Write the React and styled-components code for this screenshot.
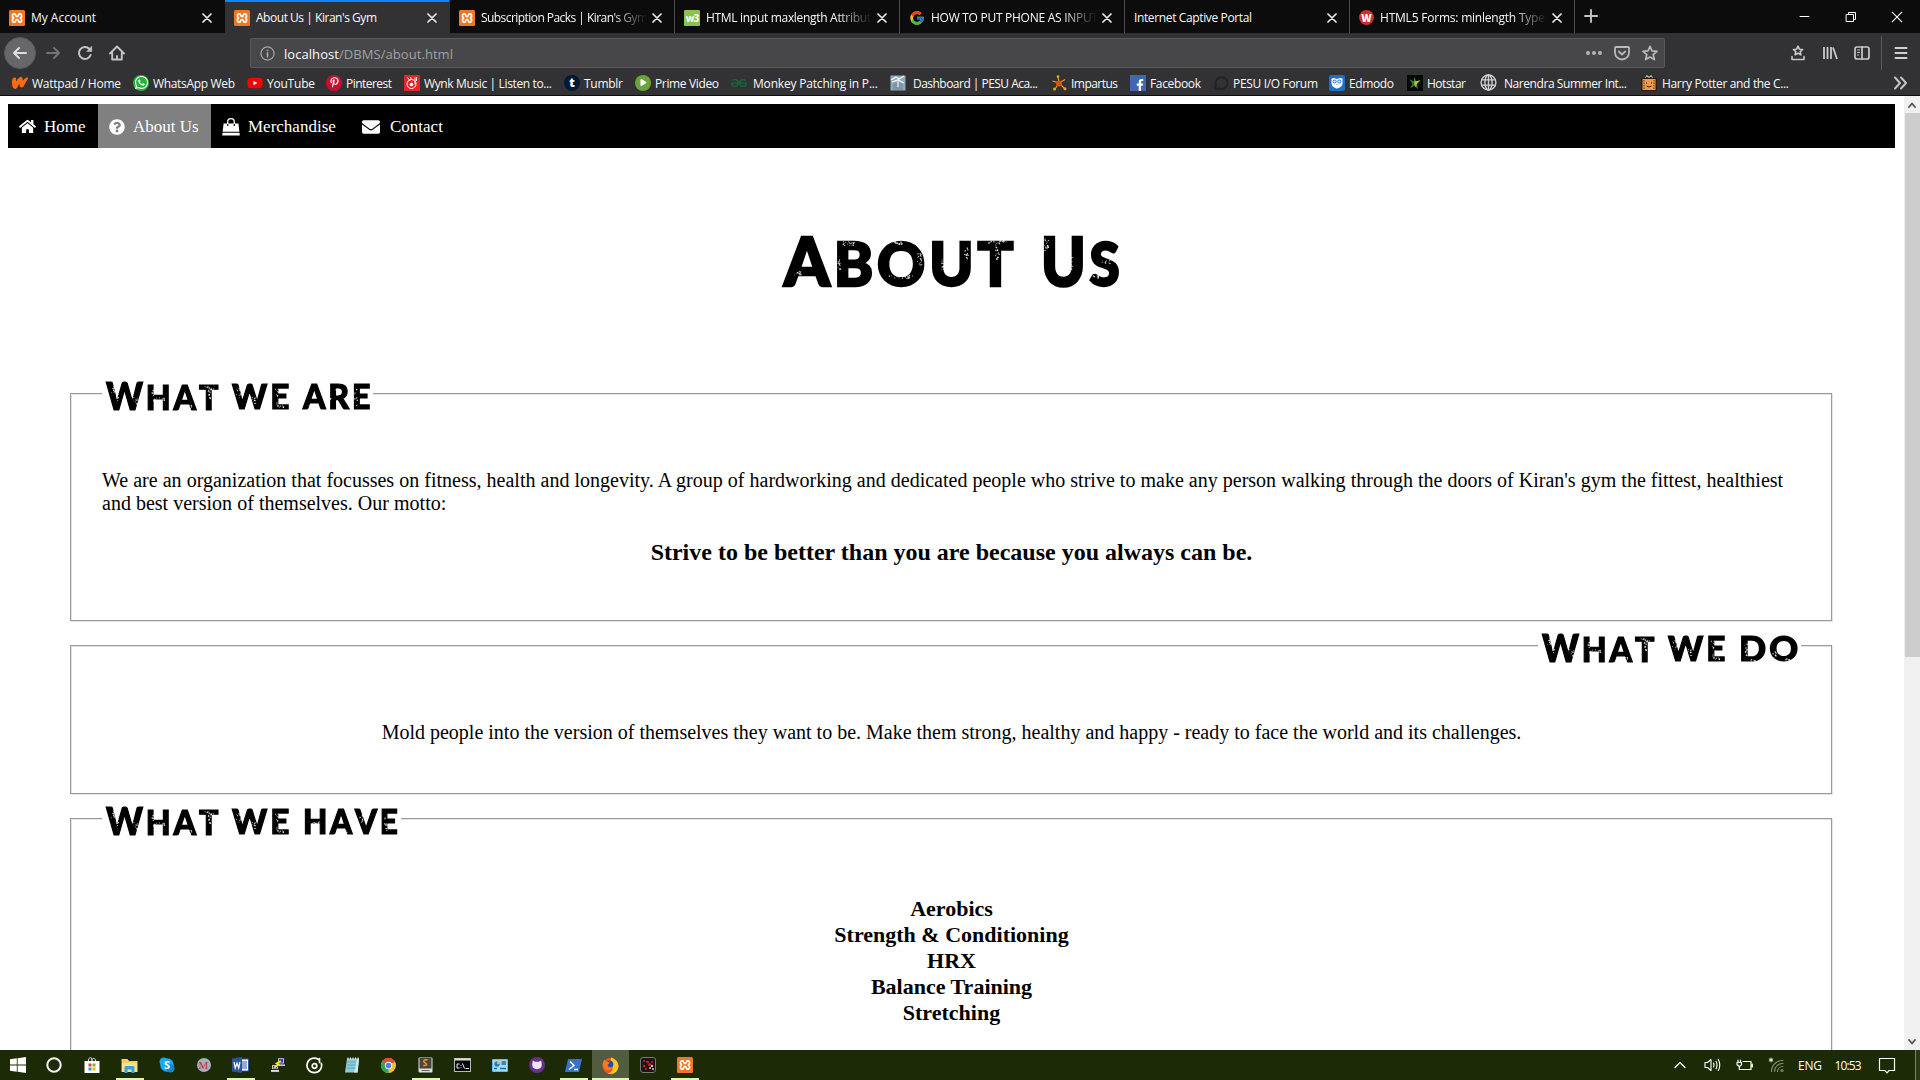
import React, { useLayoutEffect, useRef, useState } from 'react';
import styled, { createGlobalStyle, css } from 'styled-components';
import { FaWhatsapp, FaYoutube, FaPinterestP, FaFacebookF, FaHome, FaQuestionCircle, FaEnvelope, FaPlay } from 'react-icons/fa';
import { FcGoogle } from 'react-icons/fc';
import { SiWattpad, SiGeeksforgeeks } from 'react-icons/si';

const UI = '"Open Sans", "Noto Sans", sans-serif';
const SERIF = '"Liberation Serif", serif';

const GlobalStyle = createGlobalStyle`
  * { box-sizing: border-box; }
  body { margin: 0; background: #fff; overflow: hidden; }
  svg { display: block; flex: none; }
`;

/* ---------- text fitted to a width by tracking ---------- */
const FitBox = styled.span`
  display: block;
  flex: none;
  width: ${(p) => p.$w}px;
  white-space: pre;
`;

function Fit({ w, length, children }) {
  const ref = useRef(null);
  const [tracking, setTracking] = useState(0);
  useLayoutEffect(() => {
    const natural = ref.current.getBoundingClientRect().width;
    setTracking((w - natural) / Math.max(1, length - 1));
  }, [w, length]);
  return (
    <FitBox $w={w}>
      <span ref={ref} style={{ letterSpacing: `${tracking}px` }}>{children}</span>
    </FitBox>
  );
}

/* ---------- display word stretched to a width ---------- */
const StretchText = styled.span`
  display: inline-block;
  letter-spacing: ${(p) => p.$track}px;
  font-kerning: none;
  transform-origin: left;
`;

function Stretch({ w, track, children }) {
  const ref = useRef(null);
  const [scale, setScale] = useState(1);
  useLayoutEffect(() => {
    setScale(w / (ref.current.offsetWidth - track));
  }, [w, track]);
  return (
    <FitBox $w={w}>
      <StretchText ref={ref} $track={track} style={{ transform: `scaleX(${scale})` }}>{children}</StretchText>
    </FitBox>
  );
}

/* ---------- layout ---------- */
const Screen = styled.div`
  display: flex;
  flex-direction: column;
  width: 1920px;
  height: 1080px;
  overflow: hidden;
  background: #fff;
`;

const TabStrip = styled.div`
  display: flex;
  flex: none;
  height: 33px;
  background: #0c0c0d;
  color: #f9f9fa;
  font: 12px ${UI};
`;

const Tab = styled.div`
  display: flex;
  align-items: center;
  width: 225px;
  padding: 2px 7px 0 9px;
  border-right: 1px solid ${(p) => (p.$plain ? 'transparent' : '#4c4c4e')};
  ${(p) => p.$active && css`
    background: #323234;
    box-shadow: inset 0 2px 0 #0a84ff;
  `}
`;

const TabLabel = styled.div`
  flex: 1;
  min-width: 0;
  margin-left: ${(p) => (p.$noIcon ? 0 : 6)}px;
  padding-bottom: 1px;
  ${(p) => p.$fade && css`mask-image: linear-gradient(to right, #000 calc(100% - 36px), transparent calc(100% - 1px));`}
`;

const WindowControls = styled.div`
  display: flex;
  align-items: center;
  margin-left: auto;
  padding-right: 17px;
  gap: 34px;
`;

const NewTab = styled.div`
  display: flex;
  align-items: center;
  padding: 0 0 2px 9px;
`;

const Toolbar = styled.div`
  display: flex;
  flex: none;
  align-items: center;
  height: 40px;
  padding: 0 12px 0 4px;
  background: #323234;
`;

const BackButton = styled.div`
  display: grid;
  place-items: center;
  width: 32px;
  height: 32px;
  border: 1px solid #5a5a5c;
  border-radius: 50%;
  background: #676769;
`;

const NavButtons = styled.div`
  display: flex;
  align-items: center;
  gap: 16px;
  margin-left: 9px;
  width: 205px;
`;

const UrlBar = styled.div`
  display: flex;
  align-items: center;
  width: 1415px;
  height: 30px;
  padding: 0 6px 0 9px;
  border: 1px solid #59595b;
  border-radius: 2px;
  background: #474749;
  color: #a0a0a3;
  font: 13px ${UI};
`;

const UrlText = styled.div`
  flex: 1;
  margin-left: 9px;
  padding-top: 2px;
  b { font-weight: 400; color: #f9f9fa; }
`;

const UrlActions = styled.div`
  display: flex;
  align-items: center;
  gap: 12px;
`;

const ToolbarActions = styled.div`
  display: flex;
  align-items: center;
  margin-left: auto;
  gap: 16px;
`;

const ToolbarDivider = styled.div`
  width: 1px;
  height: 34px;
  margin: 0 -4px 0 -5px;
  background: #5c5c5e;
`;

const Bookmarks = styled.div`
  display: flex;
  flex: none;
  align-items: center;
  height: 23px;
  padding: 0 12px 3px 12px;
  border-bottom: 1px solid #0c0c0d;
  background: #323234;
  color: #f9f9fa;
  font: 12px ${UI};
`;

const Bookmark = styled.div`
  display: flex;
  flex: none;
  align-items: center;
  gap: ${(p) => p.$gap || 4}px;
  width: ${(p) => p.$w}px;
`;

const BookmarkText = styled.div`
  padding-top: 2px;
`;

const Overflow = styled.div`
  margin-left: auto;
`;

const Chip = styled.span`
  display: grid;
  flex: none;
  place-items: center;
  width: ${(p) => p.$s || 16}px;
  height: ${(p) => p.$s || 16}px;
  border-radius: ${(p) => p.$r || '0'};
  background: ${(p) => p.$bg || 'transparent'};
  color: ${(p) => p.$c || '#fff'};
  font: ${(p) => p.$f || `700 11px/1 ${UI}`};
  letter-spacing: ${(p) => p.$ls || 'normal'};
`;

const Viewport = styled.div`
  display: flex;
  flex: 1;
  min-height: 0;
`;

const Page = styled.main`
  flex: 1;
  padding: 8px 9px 0 8px;
  overflow: hidden;
  color: #000;
  font: 20px/23px ${SERIF};
`;

const NavBar = styled.nav`
  display: flex;
  height: 44px;
  background: #000;
`;

const NavItem = styled.a`
  display: flex;
  align-items: center;
  gap: ${(p) => p.$gap || 8}px;
  width: ${(p) => p.$w}px;
  padding: 1px 0 0 11px;
  background: ${(p) => (p.$active ? '#808080' : 'transparent')};
  color: #fff;
  font: 17px/20px ${SERIF};
  white-space: nowrap;
`;

const Printed = styled.span`
  display: flex;
  position: relative;
  gap: ${(p) => p.$gap}px;
  font-family: Lato, sans-serif;
  font-weight: 900;
  font-size: ${(p) => p.$small}px;
  line-height: ${(p) => p.$lh}px;
  text-transform: uppercase;
  -webkit-text-stroke: ${(p) => p.$stroke}px #000;
  paint-order: stroke;
  stroke-linejoin: round;
`;

const Initial = styled.span`
  font-size: ${(p) => p.$size}px;
`;

const Wear = styled.svg`
  position: absolute;
  inset: 0;
  pointer-events: none;
`;

const Title = styled.h1`
  display: flex;
  justify-content: center;
  margin: 69px 0 70px;
  height: 86px;
`;

const Panel = styled.fieldset`
  width: 1762px;
  height: ${(p) => p.$h}px;
  margin: 0 0 4px 62px;
  padding: 0 30px 0 31px;
  border: 1px solid #9a9a9a;
  box-shadow: 1px 1px 0 #e4e4e4, inset 1px 1px 0 #e4e4e4;
`;

const Legend = styled.legend`
  height: 41px;
  padding: 2px 3px 0 4px;
  margin-left: ${(p) => (p.$right ? 'auto' : '0')};
  margin-right: 0;
  background: #fff;
`;

const Paragraph = styled.p`
  margin: 55px 0 0;
  word-spacing: ${(p) => (p.$center ? 0 : 0.07)}px;
  text-align: ${(p) => (p.$center ? 'center' : 'left')};
`;

const Motto = styled.h3`
  margin: 23px 0 0;
  font: 700 24px/28px ${SERIF};
  text-align: center;
`;

const Activities = styled.ul`
  margin: 57px 0 0;
  padding: 0;
  list-style: none;
  font: 700 22px/26px ${SERIF};
  text-align: center;
`;

const Scrollbar = styled.div`
  display: flex;
  flex-direction: column;
  align-items: center;
  justify-content: space-between;
  width: 16px;
  background: #f0f0f0;
`;

const Thumb = styled.div`
  width: 15px;
  height: 544px;
  margin-bottom: auto;
  background: #cdcdcd;
`;

const ScrollArrow = styled.div`
  display: grid;
  place-items: center;
  height: 17px;
`;

const Taskbar = styled.footer`
  display: flex;
  flex: none;
  height: 30px;
  background: #1d2a06;
  color: #fff;
  font: 12px ${UI};
`;

const Task = styled.div`
  display: grid;
  place-items: center;
  width: ${(p) => p.$w || 37}px;
  background-color: ${(p) => (p.$active ? '#515c41' : 'transparent')};
  ${(p) => p.$open && css`
    background-image: linear-gradient(#dcf7ae, #dcf7ae);
    background-repeat: no-repeat;
    background-position: center bottom;
    background-size: ${p.$active ? '37px' : '28px'} 2px;
  `}
`;

const Tray = styled.div`
  display: flex;
  align-items: center;
  margin-left: auto;
`;

const TrayItem = styled.div`
  display: flex;
  justify-content: center;
  width: ${(p) => p.$w}px;
`;

const DesktopEdge = styled.div`
  width: 5px;
  height: 30px;
  margin-left: 9px;
  border-left: 1px solid #78836a;
  background: #2b3a14;
`;

/* ---------- icons ---------- */
const Line = ({ w = 16, h = w, vb = `0 0 ${w} ${h}`, c = '#b9b9bb', sw = 2, children }) => (
  <svg width={w} height={h} viewBox={vb} fill="none" stroke={c} strokeWidth={sw} strokeLinecap="round" strokeLinejoin="round">{children}</svg>
);

const Xampp = ({ s = 16 }) => (
  <svg width={s} height={s} viewBox="0 0 16 16">
    <rect width="16" height="16" rx="1.5" fill="#f37623" />
    <path d="M4.500 3.800H6L7.300 6.500H8.700L10 3.800H11.500L12.500 5V6.800L11.300 8L12.500 9.200V11L11.500 12.200H10L8.700 9.500H7.300L6 12.200H4.500L3.500 11V9.200L4.700 8L3.500 6.800V5Z" fill="none" stroke="#fff" strokeWidth="1.700" strokeLinejoin="round" />
  </svg>
);

const CloseMark = ({ s = 9, sw = 1.7, c = '#e8e8e8' }) => (
  <Line w={s} vb="0 0 10 10" c={c} sw={sw}><path d="M1 1l8 8M9 1L1 9" /></Line>
);

const Bag = () => (
  <svg width="18" height="18" viewBox="0 0 18 18" fill="#fff">
    <path d="M1.600 5.500h14.800l1 8.200H.6zM.5 14.700h17l.3 2.800H.2z" />
    <path d="M5.700 7.500V4a3.300 3.300 0 0 1 6.600 0v3.500" fill="none" stroke="#fff" strokeWidth="1.300" />
    <path d="M5.700 6v2M12.300 6v2" stroke="#000" strokeWidth="1.200" />
  </svg>
);

const Impartus = () => (
  <svg width="16" height="16" viewBox="0 0 16 16" stroke="#e8a41c" strokeWidth="1.200" fill="#e8a41c">
    <path d="M8 8L7 1.500M8 8L14 4.500M8 8l5.500 5.500M8 8L4 14M8 8L1.500 6" />
    <circle cx="8" cy="8.500" r="3" fill="#d8521c" stroke="none" />
    <circle cx="7" cy="1.600" r=".8" /><circle cx="14" cy="13.800" r=".9" /><circle cx="3.600" cy="14" r=".9" />
  </svg>
);

const Dashboard = () => (
  <svg width="16" height="16" viewBox="0 0 16 16">
    <rect x=".5" y=".5" width="15" height="15" fill="#8fa9b8" />
    <path d="M1 5l5-3 3 2 5-3M2 7l6-2 6 3" stroke="#f4f8fa" strokeWidth="1.300" fill="none" />
    <path d="M3 15V9l5-2 5 2v6z" fill="#7d97a6" /><path d="M8 6v6" stroke="#eef" strokeWidth="1.200" />
  </svg>
);

const Edmodo = () => (
  <svg width="16" height="16" viewBox="0 0 16 16">
    <rect width="16" height="16" rx="2" fill="#1f6fc9" />
    <path d="M2.500 3.500L5 3l3 1 3-1 2.500.5V8c0 3-2.500 5-5.500 5.500C5 13 2.500 11 2.500 8z" fill="#fff" />
    <circle cx="5.700" cy="6.500" r="1.500" fill="none" stroke="#1f6fc9" /><circle cx="10.300" cy="6.500" r="1.500" fill="none" stroke="#1f6fc9" />
    <path d="M7.300 9h1.400L8 10z" fill="#1f6fc9" />
  </svg>
);

const Hotstar = () => (
  <svg width="16" height="16" viewBox="0 0 16 16">
    <rect width="16" height="16" fill="#050805" />
    <path d="M2 4l5 2.500V1.500l2.500 5L14 5l-4 4 1 5-3.500-3L3 13l2.500-4z" fill="#2e7a2c" />
    <path d="M7 6.500l2.500-.5L13 5.500l-3 3-1 4-1.500-3z" fill="#c6bc1d" />
  </svg>
);

const Globe = () => (
  <Line w={17} vb="0 0 16 16" c="#cfcfd1" sw={1.300}>
    <circle cx="8" cy="8" r="7" /><ellipse cx="8" cy="8" rx="3.400" ry="7" /><path d="M8 1v14M1.700 5.500h12.600M1.700 10.500h12.600" />
  </Line>
);

const Crate = () => (
  <svg width="16" height="16" viewBox="0 0 16 16">
    <path d="M4.500 2.500l1.500-2 1 1.500h2l1-1.500 1.500 2" stroke="#ddd" fill="none" />
    <rect x="0" y="3" width="16" height="13" fill="#2b1c12" /><rect x="1.500" y="4" width="13" height="11" fill="#f29b45" />
    <path d="M3 5v9M13 5v9" stroke="#2b1c12" strokeDasharray="1.500 1" strokeWidth=".8" /><path d="M5.500 7.500v1M10.500 7.500v1M5.500 11q2.500 2 5 0" stroke="#2b1c12" fill="none" />
  </svg>
);

const Wynk = () => (
  <svg width="16" height="16" viewBox="0 0 16 16">
    <rect width="16" height="16" fill="#e2252b" />
    <circle cx="7.500" cy="9" r="4.500" fill="none" stroke="#fff" strokeWidth="1" /><circle cx="7.500" cy="9.500" r="1.800" fill="#fff" />
    <path d="M3.500 2.500L6 6M6.500 2l1 3M11 2.500v7M12.500 2v4" stroke="#fff" strokeWidth=".9" />
  </svg>
);

const Chrome = () => (
  <svg width="15" height="15" viewBox="0 0 16 16">
    <circle cx="8" cy="8" r="8" fill="#f2c12e" />
    <path d="M8 8L1.070 4A8 8 0 0 1 14.930 4z" fill="#dd4b3e" /><path d="M8 8L1.070 4A8 8 0 0 0 8 16z" fill="#2fa35a" />
    <circle cx="8" cy="8" r="3.900" fill="#fff" /><circle cx="8" cy="8" r="3" fill="#4a85ee" />
  </svg>
);

const Firefox = () => (
  <svg width="17" height="17" viewBox="0 0 17 17">
    <circle cx="8.500" cy="9" r="8" fill="#f4511e" />
    <path d="M9 .5c3 1 7.500 4 7.500 8.500a8 8 0 0 1-8 8c-2 0-3-.5-3-.5 5-1 6-5 4.500-8C9 6.500 8 4 9 .5z" fill="#ffca28" />
    <circle cx="7.600" cy="7.300" r="3.800" fill="#2a4f9f" />
    <path d="M.7 8C1 5 1.500 3.500 2.500 2.500c.3 1 1 1.700 2 2 1.500 0 2.500.5 3 1.500L5.500 8c.5 2.500 3 3 5 2-1 3-5 4-7.500 2.500z" fill="#ff7a1a" />
  </svg>
);

const appIcons = {
  windows: <svg width="16" height="16" viewBox="0 0 16 16" fill="#fff"><path d="M0 2.300l6.800-1v6.300H0zM7.600 1.200L16 0v7.600H7.600zM0 8.400h6.800v6.300L0 13.700zM7.600 8.400H16V16l-8.400-1.200z" /></svg>,
  cortana: <Line w={16} c="#f2f2f2" sw={2}><circle cx="8" cy="8" r="6.700" /></Line>,
  store: (
    <svg width="16" height="17" viewBox="0 0 16 17"><path d="M4.500 5V3a2 2 0 0 1 3.500-1.500V4M8 4V2.500a2 2 0 0 1 3.500 0V5" stroke="#ddd" fill="none" /><rect x=".5" y="4" width="15" height="12" fill="#fff" />
      <path d="M4.500 6.500h3v3h-3z" fill="#e8432e" /><path d="M8.500 6.500h3v3h-3z" fill="#7cb82f" /><path d="M4.500 10.500h3v3h-3z" fill="#2a9fe0" /><path d="M8.500 10.500h3v3h-3z" fill="#f4b400" /></svg>
  ),
  explorer: (
    <svg width="17" height="15" viewBox="0 0 17 15"><path d="M.5 1h6l1.500 2h8.500v11H.5z" fill="#f6cf62" /><path d="M1 5h15v9H1z" fill="#ffe08a" /><path d="M3.500 15V9.500q0-1.500 1.500-1.500h7q1.500 0 1.500 1.500V15h-3v-3.500h-4V15z" fill="#35a5e2" /></svg>
  ),
  skype: (
    <Chip $f={`700 11px/1 ${UI}`}><svg width="16" height="16" viewBox="0 0 16 16"><circle cx="8" cy="8" r="6.800" fill="#1eaaea" /><circle cx="4.700" cy="4.700" r="4.200" fill="#1eaaea" /><circle cx="11.300" cy="11.300" r="4.200" fill="#0c8bd4" /><text x="8" y="12" textAnchor="middle" fill="#fff">S</text></svg></Chip>
  ),
  m: <Chip $s={14} $r="50%" $bg="#a9b1b8" $c="#b0303a" $f={`400 11px/14px ${SERIF}`}>M</Chip>,
  word: (
    <svg width="17" height="16" viewBox="0 0 17 16"><rect x="8" y="2" width="8.500" height="12" fill="#fff" stroke="#2a5699" /><path d="M10 5h5M10 7h5M10 9h5M10 11h5" stroke="#2a5699" /><path d="M0 1.500L10 0v16L0 14.500z" fill="#2a5699" /><path d="M2 5l1.300 6L5 6l1.700 5L8 5" stroke="#fff" strokeWidth="1.200" fill="none" /></svg>
  ),
  putty: (
    <svg width="16" height="16" viewBox="0 0 16 16"><g stroke="#111" strokeWidth=".8"><rect x="7.500" y=".8" width="7" height="6.500" fill="#c8c8c8" /><rect x="1.500" y="7.500" width="7" height="5.500" fill="#c8c8c8" /><rect x=".5" y="12.500" width="9" height="2.800" fill="#e0e0e0" /><rect x="7.500" y="7" width="8" height="2.300" fill="#ddd" /></g><rect x="9" y="2.200" width="4" height="3.300" fill="#1d28d8" /><rect x="3" y="9" width="4" height="2.500" fill="#1d28d8" /><path d="M11 4L6.500 6.500l2 1L4 11" stroke="#ffe81a" strokeWidth="1.700" fill="none" /></svg>
  ),
  groove: <Line w={17} vb="0 0 17 17" c="#fff" sw={1.700}><path d="M12.300 2.300a7.300 7.300 0 1 0 3 4M13.500 1.500v4" /><circle cx="8.500" cy="9" r="2.300" /></Line>,
  notepad: (
    <svg width="16" height="17" viewBox="0 0 16 17"><path d="M3 1.500h12l-1.500 14H1z" fill="#8ccbd8" /><path d="M13 3l2-1.500-1.300 14H10z" fill="#cfe9ee" /><path d="M3 5h9M2.800 8h9M2.500 11h9" stroke="#5fa6b5" /><path d="M4 .5v2M6.500.5v2M9 .5v2M11.500.5v2M14 .5v2" stroke="#eee" /></svg>
  ),
  chrome: <Chrome />,
  sublime: (
    <svg width="15" height="16" viewBox="0 0 15 16"><rect x=".5" y=".5" width="14" height="15" rx="1" fill="#ddd" /><rect x="1.500" y="1" width="12" height="10.500" fill="#4b4540" /><path d="M9.500 3C6 2 4.500 4.500 7 5.800s2.500 3-1.800 2.700" stroke="#f3952a" strokeWidth="1.500" fill="none" /><rect x="3.500" y="13" width="8" height="1" fill="#666" /></svg>
  ),
  cmd: (
    <svg width="17" height="14" viewBox="0 0 17 14"><rect x=".5" y=".5" width="16" height="13" fill="#050505" stroke="#b8b8b8" /><path d="M1 1.500h15" stroke="#ddd" strokeWidth="2" /><path d="M5.500 6H3v4h2.500M7 7v.8M7 9.300v.8M8.500 5.500l2 5M11.500 10.500H15" stroke="#eee" fill="none" /></svg>
  ),
  panel: (
    <svg width="16" height="13" viewBox="0 0 16 13"><rect width="16" height="13" rx="1" fill="#5fbdf0" /><rect x="1" y="1" width="14" height="11" fill="#a6dcf8" /><circle cx="5" cy="5" r="2.700" fill="#2a7cc4" /><path d="M5 5V2.300A2.700 2.700 0 0 1 7.700 5z" fill="#f3b32c" /><path d="M9.500 3H14M9.500 5H14M2 9.500h3M8 9.500h6" stroke="#1b67ad" strokeWidth="1.300" /></svg>
  ),
  github: (
    <svg width="16" height="16" viewBox="0 0 16 16"><circle cx="8" cy="8" r="8" fill="#6a2f8c" /><path d="M3.800 3.500l2.400 1.200h3.600l2.400-1.200.5 3.500c.5 3-1.500 5.200-4.700 5.200S2.800 10 3.300 7z" fill="#efe8f2" /></svg>
  ),
  powershell: <svg width="17" height="13" viewBox="0 0 17 13"><path d="M3 0h14l-3 13H0z" fill="#3573c8" /><path d="M5 2.500l4 4-5 4M9 10.500h4" stroke="#fff" strokeWidth="1.500" fill="none" /></svg>,
  firefox: <Firefox />,
  dots: (
    <svg width="16" height="16" viewBox="0 0 16 16"><rect x=".5" y=".5" width="15" height="15" rx="2.500" fill="#1a1416" stroke="#777" /><g fill="#cf2027"><circle cx="4" cy="4" r="1.100" /><circle cx="7.500" cy="5" r="1.300" /><circle cx="9.500" cy="7.500" r="1.600" /><circle cx="4" cy="9" r="1.200" /><circle cx="6" cy="12" r="1.100" /><circle cx="12" cy="5" r="1" /></g><g fill="#e7c4c4"><circle cx="12" cy="9" r="1.200" /><circle cx="10" cy="11" r="1" /><circle cx="13" cy="12" r="1" /></g></svg>
  ),
  xampp: <Xampp s={16} />,
};

/* ---------- worn print headings ---------- */
function specks(areas) {
  let seed = 7;
  const rand = () => {
    seed = (seed * 16807) % 2147483647;
    return seed / 2147483647;
  };
  return areas.flatMap(([x, y, w, h, n]) =>
    Array.from({ length: n }, () => ({
      x: x + rand() * w,
      y: y + rand() * h,
      w: 0.5 + rand() * 1,
      h: 0.4 + rand() * 1,
    }))
  );
}

function PrintedText({ words, big, small, lh, gap, stroke, track, wear }) {
  return (
    <Printed $small={small} $lh={lh} $gap={gap} $stroke={stroke}>
      {words.map(([text, w, bigFirst = true]) => (
        <Stretch key={text} w={w} track={track}>
          {bigFirst ? <Initial $size={big}>{text[0]}</Initial> : text[0]}
          {text.slice(1)}
        </Stretch>
      ))}
      <Wear width="100%" height="100%">
        {specks(wear).map((s, i) => (
          <rect key={i} x={s.x} y={s.y} width={s.w} height={s.h} fill="#fff" opacity=".85" />
        ))}
      </Wear>
    </Printed>
  );
}

const titleWear = [
  [10, 54, 7, 4, 16], [58, 24, 12, 4, 20], [53, 42, 3, 11, 14], [64, 55, 9, 3, 12],
  [106, 24, 12, 3, 18], [133, 36, 4, 13, 20], [104, 58, 24, 3, 22],
  [157, 42, 4, 12, 16], [180, 30, 4, 12, 16], [204, 23, 18, 3, 20], [211, 26, 4, 16, 22],
  [260, 21, 4, 13, 22], [284, 40, 4, 12, 18], [317, 43, 9, 4, 10], [308, 58, 8, 3, 8],
];
const whatWear = [
  [5, 11, 3, 7, 10], [9, 19, 3, 7, 8], [27, 22, 4, 7, 10], [47, 22, 12, 3, 12], [45, 13, 3, 14, 7],
  [77, 30, 8, 3, 10], [97, 11, 10, 3, 12], [101, 14, 3, 11, 10],
  [130, 13, 4, 10, 10], [145, 22, 4, 7, 9], [169, 13, 3, 18, 12], [171, 30, 7, 2, 6],
];
const headingWear = {
  are: [...whatWear, [202, 30, 7, 3, 8], [222, 13, 3, 18, 10], [229, 13, 5, 4, 6], [248, 13, 3, 18, 10]],
  do: [...whatWear, [202, 14, 3, 17, 12], [208, 32, 7, 2, 8], [230, 24, 4, 7, 10], [243, 31, 8, 2, 8]],
  have: [...whatWear, [202, 21, 12, 3, 10], [236, 30, 7, 3, 8], [253, 14, 4, 9, 10], [278, 13, 3, 18, 10]],
};

function Heading({ words, wear }) {
  return <PrintedText words={words} big={37.5} small={34.5} lh={41} gap={14} stroke={1.200} track={3} wear={wear} />;
}

/* ---------- data ---------- */
const W3 = () => <Chip $bg="#8bc34a" $r="1px" $f={`700 10px/1 ${UI}`} $ls="-1px">w3</Chip>;
const WIcon = () => <Chip $s={15} $r="50%" $bg="#c8322b" $f={`800 10px/1 ${UI}`}>W</Chip>;

const tabs = [
  { text: 'My Account', w: 65, icon: <Xampp />, plain: true },
  { text: "About Us | Kiran's Gym", w: 121, icon: <Xampp />, active: true, plain: true },
  { text: "Subscription Packs | Kiran's Gym", w: 167, icon: <Xampp />, fade: true },
  { text: 'HTML input maxlength Attribut', w: 165, icon: <W3 />, fade: true },
  { text: 'HOW TO PUT PHONE AS INPUT', w: 167, icon: <FcGoogle size={16} />, fade: true },
  { text: 'Internet Captive Portal', w: 118 },
  { text: 'HTML5 Forms: minlength Type', w: 165, icon: <WIcon />, fade: true },
];

const bookmarks = [
  { text: 'Wattpad / Home', w: 89, slot: 121, icon: <SiWattpad size={16} color="#ff6a12" /> },
  { text: 'WhatsApp Web', w: 82, slot: 114, icon: <Chip $r="50%" $bg="#23b33a"><FaWhatsapp size={15} /></Chip> },
  { text: 'YouTube', w: 48, slot: 79, icon: <FaYoutube size={16} color="#f60002" style={{ background: 'radial-gradient(#fff 25%, transparent 26%)' }} /> },
  { text: 'Pinterest', w: 46, slot: 78, icon: <Chip $r="50%" $bg="#c8102e"><FaPinterestP size={11} /></Chip> },
  { text: 'Wynk Music | Listen to...', w: 128, slot: 160, icon: <Wynk /> },
  { text: 'Tumblr', w: 39, slot: 71, icon: <Chip $r="50%" $bg="#021935" $f={`800 12px/1 ${UI}`}>t</Chip> },
  { text: 'Prime Video', w: 64, slot: 96, icon: <Chip $r="50%" $bg="#6ba43a"><FaPlay size={7} /></Chip> },
  { text: 'Monkey Patching in P...', w: 125, slot: 159, icon: <SiGeeksforgeeks size={16} color="#17683c" />, gap: 6 },
  { text: 'Dashboard | PESU Aca...', w: 125, slot: 161, icon: <Dashboard />, gap: 7 },
  { text: 'Impartus', w: 47, slot: 79, icon: <Impartus /> },
  { text: 'Facebook', w: 51, slot: 83, icon: <Chip $bg="#4267b2"><FaFacebookF size={12} style={{ transform: 'translate(2px, 2px)' }} /></Chip> },
  { text: 'PESU I/O Forum', w: 85, slot: 116, icon: <Line w={16} c="#232325" sw={2}><path d="M2 14l1-3.500A6 6 0 1 1 6 13.600z" /></Line> },
  { text: 'Edmodo', w: 45, slot: 78, icon: <Edmodo /> },
  { text: 'Hotstar', w: 39, slot: 73, icon: <Hotstar /> },
  { text: 'Narendra Summer Int...', w: 123, slot: 161, icon: <Globe />, gap: 7 },
  { text: 'Harry Potter and the C...', w: 127, slot: 160, icon: <Crate />, gap: 5 },
];

const tasks = [
  ['windows', { $w: 36 }], ['cortana', { $w: 36 }], ['store', { $w: 39 }], ['explorer', { $open: true }], ['skype'], ['m'],
  ['word', { $open: true }], ['putty'], ['groove'], ['notepad'], ['chrome'], ['sublime', { $open: true }],
  ['cmd'], ['panel'], ['github'], ['powershell', { $open: true }], ['firefox', { $open: true, $active: true }],
  ['dots'], ['xampp', { $open: true }],
];

const activities = ['Aerobics', 'Strength & Conditioning', 'HRX', 'Balance Training', 'Stretching'];

export default function App() {
  return (
    <Screen>
      <GlobalStyle />
      <TabStrip>
        {tabs.map((t) => (
          <Tab key={t.text} $active={t.active} $plain={t.plain}>
            {t.icon}
            <TabLabel $noIcon={!t.icon} $fade={t.fade}>
              <Fit w={t.w} length={t.text.length}>{t.text}</Fit>
            </TabLabel>
            <Line w={19} h={10} vb="0 0 19 10" c="#ececec" sw={1.700}><path d="M5 1l8 8M13 1L5 9" /></Line>
          </Tab>
        ))}
        <NewTab><Line w={14} c="#c4c4c6" sw={1.900} vb="0 0 14 14"><path d="M7 1v12M1 7h12" /></Line></NewTab>
        <WindowControls>
          <Line w={12} h={10} c="#fff" sw={1}><path d="M1 4.500h9" /></Line>
          <Line w={12} c="#fff" sw={1} vb="0 0 12 12"><path d="M1.500 3.500h7v7h-7zM3.500 3.500v-2h7v7h-2" /></Line>
          <CloseMark s={12} sw={0.9} c="#fff" />
        </WindowControls>
      </TabStrip>

      <Toolbar>
        <BackButton><Line w={16} c="#dededf"><path d="M14 8H2M7 3L2 8l5 5" /></Line></BackButton>
        <NavButtons>
          <Line w={16} c="#737375"><path d="M2 8h12M9 3l5 5-5 5" /></Line>
          <Line w={16} c="#c4c4c6"><path d="M13.600 10A6 6 0 1 1 12.500 4" /><path d="M14.800 1.500v5h-5z" fill="#c4c4c6" strokeWidth=".5" /></Line>
          <Line w={16} c="#c4c4c6" sw={1.900}><path d="M1 8.500L8 1.500l7 7M3.200 8v6.500h9.600V8M8 14v-3" /></Line>
        </NavButtons>
        <UrlBar>
          <Line w={15} vb="0 0 16 16" c="#a5a5a8" sw={1.300}><circle cx="8" cy="8" r="7" /><path d="M8 7.300v4M8 4.600v.2" strokeWidth="1.800" /></Line>
          <UrlText><Fit w={169} length={25}><b>localhost</b>/DBMS/about.html</Fit></UrlText>
          <UrlActions>
            <svg width="16" height="16" viewBox="0 0 16 16" fill="#b4b4b6"><circle cx="2" cy="8" r="2" /><circle cx="8" cy="8" r="2" /><circle cx="14" cy="8" r="2" /></svg>
            <Line w={16}><path d="M2 2h12q1 0 1 1v4.500a7 7 0 0 1-14 0V3q0-1 1-1zM4.800 6.500L8 9.500l3.200-3" strokeWidth="1.800" /></Line>
            <Line w={16} sw={1.700}><path d="M8 1.300l2 4.600 5 .4-3.800 3.300 1.200 5L8 12l-4.400 2.600 1.200-5L1 6.300l5-.4z" /></Line>
          </UrlActions>
        </UrlBar>
        <ToolbarActions>
          <Line w={16} c="#c8c8ca" sw={1.600}><path d="M8 1.200l1.400 3 3.200.3-2.400 2.200.7 3.200L8 8.200l-2.900 1.700.7-3.200-2.400-2.200 3.200-.3zM2 11.500v3h12v-3" /></Line>
          <Line w={16} c="#c8c8ca" sw={1.800}><path d="M2 2v12M5.500 2v12M9 2v12M11 2.500L15 14" strokeLinecap="butt" /></Line>
          <Line w={16} c="#c8c8ca" sw={1.700}><rect x="1" y="2" width="14" height="12" rx="2" /><path d="M8 2v12" /><path d="M3.500 5h2M3.500 7.500h2M3.500 10h1" strokeWidth="1" /></Line>
          <ToolbarDivider />
          <Line w={14} h={14} c="#d0d0d2" vb="0 0 14 14"><path d="M1.500 2h11M1.500 7h11M1.500 12h11" /></Line>
        </ToolbarActions>
      </Toolbar>

      <Bookmarks>
        {bookmarks.map((b) => (
          <Bookmark key={b.text} $w={b.slot} $gap={b.gap}>
            {b.icon}
            <BookmarkText><Fit w={b.w} length={b.text.length}>{b.text}</Fit></BookmarkText>
          </Bookmark>
        ))}
        <Overflow><Line w={15} h={14} vb="0 0 15 14" c="#c4c4c6"><path d="M2 1.500L7 7l-5 5.500M8 1.500L13 7l-5 5.500" /></Line></Overflow>
      </Bookmarks>

      <Viewport>
        <Page>
          <NavBar>
            <NavItem $w={90}><FaHome size={17} />Home</NavItem>
            <NavItem $w={113} $active><FaQuestionCircle size={16} />About Us</NavItem>
            <NavItem $w={140}><Bag />Merchandise</NavItem>
            <NavItem $w={120} $gap={10}><FaEnvelope size={18} />Contact</NavItem>
          </NavBar>

          <Title>
            <PrintedText words={[['About', 229], ['Us', 79]]} big={67} small={61} lh={86} gap={28} stroke={2.500} track={4} wear={titleWear} />
          </Title>

          <Panel $h={248}>
            <Legend><Heading words={[['What', 112], ['we', 57, false], ['are', 67, false]]} wear={headingWear.are} /></Legend>
            <Paragraph>
              We are an organization that focusses on fitness, health and longevity. A group of hardworking and dedicated people who strive to make any person walking through the doors of Kiran's gym the fittest, healthiest and best version of themselves. Our motto:
            </Paragraph>
            <Motto>Strive to be better than you are because you always can be.</Motto>
          </Panel>

          <Panel $h={169}>
            <Legend $right><Heading words={[['What', 112], ['we', 57, false], ['do', 59, false]]} wear={headingWear.do} /></Legend>
            <Paragraph $center>
              Mold people into the version of themselves they want to be. Make them strong, healthy and happy - ready to face the world and its challenges.
            </Paragraph>
          </Panel>

          <Panel $h={300}>
            <Legend><Heading words={[['What', 112], ['we', 57, false], ['have', 95, false]]} wear={headingWear.have} /></Legend>
            <Activities>
              {activities.map((a) => <li key={a}>{a}</li>)}
            </Activities>
          </Panel>
        </Page>
        <Scrollbar>
          <ScrollArrow><Line w={8} h={6} c="#555" sw={1.900}><path d="M1 5l3-3.500L7 5" /></Line></ScrollArrow>
          <Thumb />
          <ScrollArrow><Line w={8} h={6} c="#555" sw={1.900}><path d="M1 1l3 3.500L7 1" /></Line></ScrollArrow>
        </Scrollbar>
      </Viewport>

      <Taskbar>
        {tasks.map(([name, props]) => <Task key={name} {...props}>{appIcons[name]}</Task>)}
        <Tray>
          <TrayItem $w={32}><Line w={12} h={8} c="#fff" sw={1.300}><path d="M1 6.500l5-5 5 5" /></Line></TrayItem>
          <TrayItem $w={32}><Line w={17} h={14} c="#fff" sw={1.100}><path d="M1 4.500h2.500L7 1.500v11L3.500 9.500H1zM9.500 5q1 2 0 4M12 3.300q2 3.700 0 7.400M14.300 1.500q3 5.500 0 11" /></Line></TrayItem>
          <TrayItem $w={32}><Line w={17} h={12} c="#fff" sw={1.200}><path d="M7 2.500h8v8H5M16.300 5v3M1 3.500h4.500v2L4.500 7H2.500L1 5.500zM2 1v2M4.500 1v2M3.300 7v3.500H6" /></Line></TrayItem>
          <TrayItem $w={32}><Line w={17} h={16} c="#7f8a6f" sw={1.200}><path d="M3.500 14.500A11 11 0 0 1 15 3.500M6.500 14.500A8 8 0 0 1 15 6.500M9.500 14.500A5.500 5.500 0 0 1 15 9.500" /><circle cx="14" cy="13.500" r="1" /><path d="M3 1v4M1.200 2l3.600 2M4.800 2L1.200 4" stroke="#fff" strokeWidth=".9" /></Line></TrayItem>
          <TrayItem $w={36}><Fit w={24} length={3}>ENG</Fit></TrayItem>
          <TrayItem $w={40}><Fit w={27} length={5}>10:53</Fit></TrayItem>
          <TrayItem $w={38}><Line w={18} h={17} c="#fff" sw={1.200}><path d="M1.500 1.500h15v12H11L9 15.800 7 13.500H1.500z" strokeLinejoin="miter" /></Line></TrayItem>
          <DesktopEdge />
        </Tray>
      </Taskbar>
    </Screen>
  );
}
